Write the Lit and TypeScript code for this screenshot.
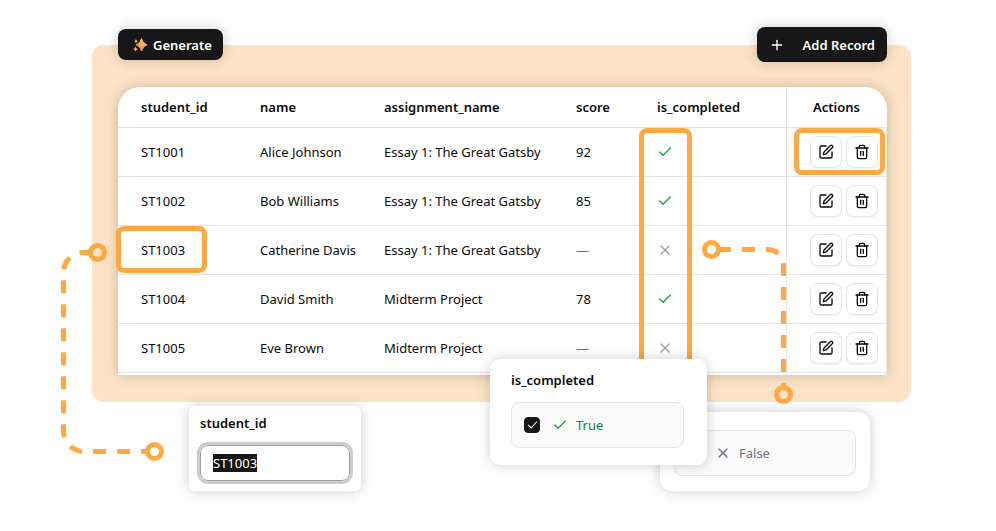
import { LitElement, html, svg, css, nothing } from "lit";
import { customElement, query } from "lit/decorators.js";

interface Submission {
  id: string;
  name: string;
  assignment: string;
  score: number | null;
  completed: boolean;
}

const submissions: Submission[] = [
  { id: "ST1001", name: "Alice Johnson", assignment: "Essay 1: The Great Gatsby", score: 92, completed: true },
  { id: "ST1002", name: "Bob Williams", assignment: "Essay 1: The Great Gatsby", score: 85, completed: true },
  { id: "ST1003", name: "Catherine Davis", assignment: "Essay 1: The Great Gatsby", score: null, completed: false },
  { id: "ST1004", name: "David Smith", assignment: "Midterm Project", score: 78, completed: true },
  { id: "ST1005", name: "Eve Brown", assignment: "Midterm Project", score: null, completed: false },
];

const glyphs = {
  check: svg`<path d="M20 6 9 17l-5-5"/>`,
  cross: svg`<path d="M18 6 6 18"/><path d="m6 6 12 12"/>`,
  plus: svg`<path d="M5 12h14"/><path d="M12 5v14"/>`,
  edit: svg`<path d="M12 3H5a2 2 0 0 0-2 2v14a2 2 0 0 0 2 2h14a2 2 0 0 0 2-2v-7"/><path d="M18.375 2.625a1 1 0 0 1 3 3l-9.013 9.014a2 2 0 0 1-.853.505l-2.873.84a.5.5 0 0 1-.62-.62l.84-2.873a2 2 0 0 1 .506-.852z"/>`,
  trash: svg`<path d="M3 6h18"/><path d="M19 6v14a2 2 0 0 1-2 2H7a2 2 0 0 1-2-2V6"/><path d="M8 6V4a2 2 0 0 1 2-2h4a2 2 0 0 1 2 2v2"/><path d="M10 11v6"/><path d="M14 11v6"/>`,
};

const icon = (name: keyof typeof glyphs, tone = "") => html`
  <svg class="icon ${tone}" viewBox="0 0 24 24" aria-hidden="true">${glyphs[name]}</svg>
`;

@customElement("app-root")
export class AppRoot extends LitElement {
  static styles = css`
    :host {
      --accent: #ffa940;
      --ink: #0a0a0a;
      --line: #e5e5e5;
      --lift: 0 0 14px rgba(0, 0, 0, 0.2);
      display: block;
      min-height: 100vh;
      box-sizing: border-box;
      padding: 45px 85px 40px 92px;
      background: #fff;
      color: var(--ink);
      font: 13px/20px "Segoe UI", "Noto Sans", "Open Sans", sans-serif;
    }
    *,
    *::before,
    *::after {
      box-sizing: border-box;
    }
    .panel {
      position: relative;
      display: flex;
      flex-direction: column;
      gap: 25px;
      padding: 0 24px 27px 26px;
      border-radius: 12px;
      background: #fde3c5;
    }
    .toolbar {
      display: flex;
      align-items: center;
      justify-content: space-between;
      margin-top: -18px;
    }
    button {
      font: inherit;
      cursor: pointer;
    }
    .primary {
      display: flex;
      align-items: center;
      border: 0;
      border-radius: 8px;
      background: #171717;
      color: #fff;
      font-weight: 600;
      box-shadow: var(--lift);
    }
    .generate {
      gap: 5px;
      height: 31px;
      padding: 0 11px 0 14px;
    }
    .add {
      gap: 18px;
      height: 35px;
      padding: 0 12px;
    }
    .icon {
      display: block;
      flex: none;
      width: 16px;
      height: 16px;
      fill: none;
      stroke: currentColor;
      stroke-width: 2;
      stroke-linecap: round;
      stroke-linejoin: round;
    }
    .sparkles {
      display: block;
      width: 16px;
      height: 16px;
    }
    .yes {
      color: #16a34a;
    }
    .no {
      color: #9ca3af;
    }
    .sheet {
      border-radius: 22px 22px 0 0;
      background: #fff;
      box-shadow: var(--lift);
    }
    table {
      width: 100%;
      table-layout: fixed;
      border-collapse: separate;
      border-spacing: 0;
    }
    .c-id { width: 119px; }
    .c-name { width: 124px; }
    .c-assignment { width: 192px; }
    .c-score { width: 81px; }
    .c-actions { width: 101px; }
    th,
    td {
      position: relative;
      padding: 0 0 0 23px;
      border-bottom: 1px solid var(--line);
      text-align: left;
      white-space: nowrap;
    }
    th {
      height: 41px;
      font-weight: 600;
    }
    td {
      height: 49px;
    }
    .actions {
      border-left: 1px solid var(--line);
      border-right: 1px solid var(--line);
    }
    th.actions {
      padding: 0;
      text-align: center;
      border-top-right-radius: 22px;
      border-right-color: transparent;
    }
    .tail td {
      height: 2px;
      border-bottom: 0;
    }
    .empty {
      color: #737373;
    }
    .row-actions {
      display: flex;
      gap: 4px;
    }
    .square {
      display: grid;
      place-items: center;
      width: 32px;
      height: 32px;
      padding: 0;
      border: 1px solid var(--line);
      border-radius: 8px;
      background: #fff;
      color: var(--ink);
      box-shadow: 0 1px 2px rgba(0, 0, 0, 0.06);
    }
    .mark {
      position: absolute;
      z-index: 1;
      top: 0;
      height: 47px;
      border: 5px solid var(--accent);
      border-radius: 8px;
      pointer-events: none;
    }
    .mark-id {
      left: -2px;
      width: 91px;
    }
    .mark-completed {
      left: 5px;
      width: 53px;
      height: 244px;
    }
    .mark-actions {
      left: 7px;
      width: 91px;
    }
    .link {
      position: absolute;
      z-index: 2;
      fill: none;
      stroke: var(--accent);
      stroke-width: 5;
      pointer-events: none;
    }
    .dash {
      stroke-dasharray: 13 11;
    }
    .link-id {
      left: -32px;
      top: 198px;
    }
    .link-completed {
      right: 117px;
      top: 195px;
    }
    .card {
      position: absolute;
      z-index: 3;
      background: #fff;
      box-shadow: var(--lift);
    }
    .caption {
      display: block;
      font-weight: 600;
    }
    .card-id {
      left: 97px;
      top: calc(100% + 4px);
      width: 172px;
      padding: 7px 11px 10px;
      border-radius: 6px;
    }
    .card-true {
      right: 204px;
      top: calc(100% - 43px);
      z-index: 5;
      width: 217px;
      padding: 11px 23px 17px 21px;
      border-radius: 10px;
    }
    .card-false {
      right: 41px;
      top: calc(100% + 10px);
      z-index: 4;
      width: 210px;
      padding: 18px 14px 15px;
      border-radius: 12px;
    }
    .field {
      display: block;
      width: 100%;
      height: 36px;
      margin-top: 12px;
      padding: 0 12px;
      border: 1px solid #a1a1a1;
      border-radius: 8px;
      outline: 3px solid #cccccc;
      background: #fff;
      color: var(--ink);
      font: inherit;
    }
    .field::selection {
      background: #171717;
      color: #fff;
    }
    .option {
      display: flex;
      align-items: center;
      height: 46px;
      padding: 0 12px;
      border: 1px solid var(--line);
      border-radius: 8px;
      background: #fafafa;
    }
    .caption + .option {
      margin-top: 12px;
    }
    .value {
      display: flex;
      align-items: center;
      gap: 8px;
      margin-left: 12px;
    }
    .value-true {
      color: #15803d;
    }
    .value-false {
      color: #6b7280;
    }
    .tick {
      display: grid;
      place-items: center;
      appearance: none;
      width: 16px;
      height: 16px;
      margin: 0;
      border: 1px solid #171717;
      border-radius: 4px;
      background: #fff;
    }
    .tick:checked {
      background: #171717;
    }
    .tick:checked::after {
      content: "";
      width: 5px;
      height: 9px;
      margin-bottom: 3px;
      border: solid #fff;
      border-width: 0 1px 1px 0;
      rotate: 42deg;
    }
  `;

  @query(".field") private field!: HTMLInputElement;

  firstUpdated() {
    this.field.focus();
    this.field.select();
  }

  private row(item: Submission, index: number) {
    return html`
      <tr>
        <td>${item.id}${index === 2 ? html`<span class="mark mark-id"></span>` : nothing}</td>
        <td>${item.name}</td>
        <td>${item.assignment}</td>
        <td>${item.score ?? html`<span class="empty">—</span>`}</td>
        <td>
          ${item.completed ? icon("check", "yes") : icon("cross", "no")}
          ${index === 0 ? html`<span class="mark mark-completed"></span>` : nothing}
        </td>
        <td class="actions">
          <div class="row-actions">
            <button class="square" type="button" aria-label="Edit ${item.id}">${icon("edit")}</button>
            <button class="square" type="button" aria-label="Delete ${item.id}">${icon("trash")}</button>
          </div>
          ${index === 0 ? html`<span class="mark mark-actions"></span>` : nothing}
        </td>
      </tr>
    `;
  }

  render() {
    return html`
      <main class="panel">
        <div class="toolbar">
          <button class="primary generate" type="button">
            <svg class="sparkles" viewBox="0 0 16 16" aria-hidden="true">
              <defs>
                <linearGradient id="glow" x1="0" y1="1" x2="1" y2="0">
                  <stop offset="0" stop-color="#f5825a" />
                  <stop offset="1" stop-color="#ffd35c" />
                </linearGradient>
              </defs>
              <g fill="url(#glow)">
                <path d="M9.500 1.500Q10.500 6.500 15 7.800Q10.500 9.100 9.500 14Q8.500 9.100 4 7.800Q8.500 6.500 9.500 1.500Z" stroke="url(#glow)" stroke-linejoin="round" />
                <path d="M4 2Q4.400 3.800 6 4.200Q4.400 4.600 4 6.400Q3.600 4.600 2 4.200Q3.600 3.800 4 2Z" />
                <path d="M3.500 9.500Q4 11.500 6 12Q4 12.500 3.500 14.500Q3 12.500 1 12Q3 11.500 3.500 9.500Z" />
              </g>
            </svg>
            Generate
          </button>
          <button class="primary add" type="button">${icon("plus")} Add Record</button>
        </div>

        <div class="sheet">
          <table>
            <colgroup>
              <col class="c-id" />
              <col class="c-name" />
              <col class="c-assignment" />
              <col class="c-score" />
              <col />
              <col class="c-actions" />
            </colgroup>
            <thead>
              <tr>
                <th scope="col">student_id</th>
                <th scope="col">name</th>
                <th scope="col">assignment_name</th>
                <th scope="col">score</th>
                <th scope="col">is_completed</th>
                <th scope="col" class="actions">Actions</th>
              </tr>
            </thead>
            <tbody>
              ${submissions.map((item, index) => this.row(item, index))}
              <tr class="tail" aria-hidden="true">
                <td colspan="5"></td>
                <td class="actions"></td>
              </tr>
            </tbody>
          </table>
        </div>

        <svg class="link link-id" width="105" height="218" aria-hidden="true">
          <path class="dash" d="M32.500 9.500H23.500a20 20 0 0 0-20 20V188.500a20 20 0 0 0 20 20H86" />
          <circle cx="37.500" cy="9.500" r="7" />
          <circle cx="94.500" cy="208.500" r="7" />
        </svg>
        <svg class="link link-completed" width="92" height="164" aria-hidden="true">
          <path class="dash" d="M16 9.500H65.500a16 16 0 0 1 16 16V147" />
          <circle cx="9.500" cy="9.500" r="7" />
          <circle cx="81.500" cy="154.500" r="7" />
        </svg>

        <section class="card card-id">
          <label class="caption" for="student-id">student_id</label>
          <input class="field" id="student-id" type="text" value="ST1003" />
        </section>

        <section class="card card-false" aria-label="is_completed">
          <label class="option">
            <input class="tick" type="checkbox" />
            <span class="value value-false">${icon("cross")} False</span>
          </label>
        </section>

        <section class="card card-true">
          <span class="caption">is_completed</span>
          <label class="option">
            <input class="tick" type="checkbox" checked />
            <span class="value value-true">${icon("check", "yes")} True</span>
          </label>
        </section>
      </main>
    `;
  }
}
